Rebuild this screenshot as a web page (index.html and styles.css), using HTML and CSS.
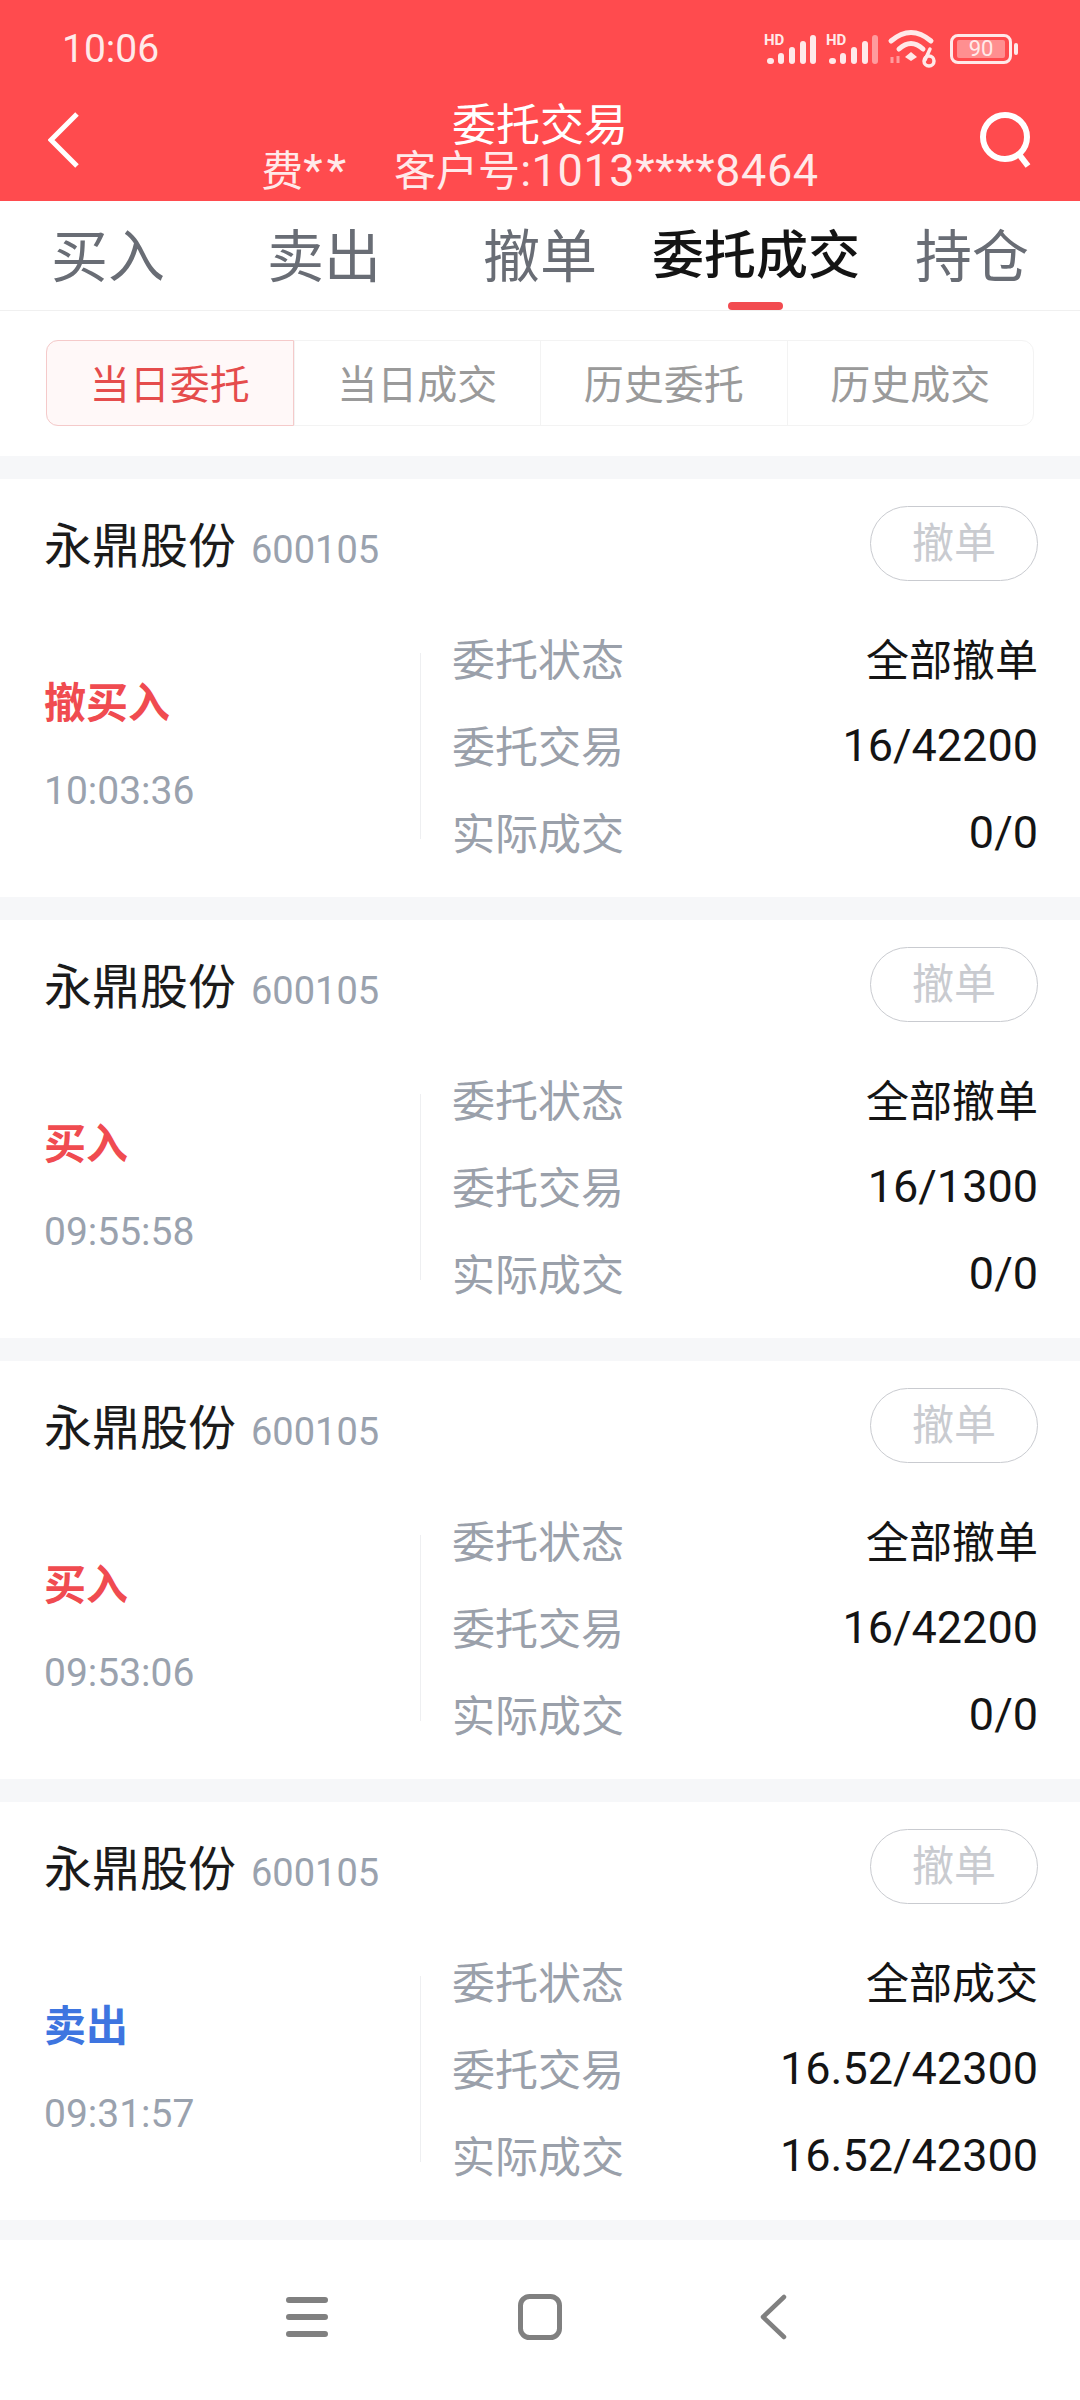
FILE: index.html
```html
<!DOCTYPE html>
<html lang="zh">
<head>
  <title>委托交易</title>
  <meta name="viewport" content="width=device-width, initial-scale=1.0">
  <link rel="stylesheet" href="styles.css">
</head>
<body>
  <div id="app">
    <div id="header">
      <div class="status-bar">
        <span class="clock">10:06</span>
        <div class="status-icons">
          <svg class="signal" width="52" height="32" viewBox="0 0 52 32">
            <text x="0" y="12" class="hd">HD</text>
            <rect x="3" y="25" width="7" height="6" rx="3" fill="#ffe9e9"/>
            <rect x="14" y="20" width="6" height="11" rx="3" fill="#ffe9e9"/>
            <rect x="25" y="14" width="6" height="17" rx="3" fill="#ffe9e9"/>
            <rect x="36" y="8" width="6" height="23" rx="3" fill="#ffe9e9"/>
            <rect x="46" y="2" width="6" height="29" rx="3" fill="#ffe9e9"/>
          </svg>
          <svg class="signal second" width="52" height="32" viewBox="0 0 52 32">
            <text x="0" y="12" class="hd">HD</text>
            <rect x="3" y="25" width="7" height="6" rx="3" fill="#ffe9e9"/>
            <rect x="14" y="20" width="6" height="11" rx="3" fill="#ffe9e9"/>
            <rect x="25" y="14" width="6" height="17" rx="3" fill="#ffe9e9"/>
            <rect x="36" y="8" width="6" height="23" rx="3" fill="#ffe9e9"/>
            <rect x="46" y="2" width="6" height="29" rx="3" fill="#ff9b9d"/>
          </svg>
          <svg class="wifi" width="50" height="38" viewBox="0 0 50 38">
            <path d="M3 11 Q23 -6 43 11" fill="none" stroke="#ffe9e9" stroke-width="5" stroke-linecap="round"/>
            <path d="M11 19 Q23 8 35 19" fill="none" stroke="#ffe9e9" stroke-width="5" stroke-linecap="round"/>
            <path d="M17 27 L23 22 L29 27 L23 31 Z" fill="#ffe9e9"/>
            <path d="M4 27 V33 M10 26 V33" stroke="#ff9b9d" stroke-width="3"/>
            <circle cx="41" cy="31" r="5" fill="none" stroke="#ffe9e9" stroke-width="3.5"/>
            <path d="M37 30 L42 19" stroke="#ffe9e9" stroke-width="3.5" stroke-linecap="round"/>
          </svg>
          <div class="battery">
            <div class="battery-body"><span class="battery-level">90</span></div>
            <div class="battery-nub"></div>
          </div>
        </div>
      </div>
      <div class="title-bar">
        <svg class="nav-icon" width="54" height="56" viewBox="0 0 54 56">
          <path d="M29 2 L3 28 L29 54" fill="none" stroke="#fff" stroke-width="5"/>
        </svg>
        <div class="titles">
          <div class="title">委托交易</div>
          <div class="subtitle">费<span class="stars">**</span><span class="account">客户号<span class="digits">:1013****8464</span></span></div>
        </div>
        <svg class="nav-icon" width="54" height="56" viewBox="0 0 54 56">
          <circle cx="27" cy="25" r="22" fill="none" stroke="#fff" stroke-width="6"/>
          <path d="M40 41 L50 54" stroke="#fff" stroke-width="6"/>
        </svg>
      </div>
    </div>

    <div id="tabs">
      <div class="tab">买入</div>
      <div class="tab">卖出</div>
      <div class="tab">撤单</div>
      <div class="tab tab-active">委托成交</div>
      <div class="tab">持仓</div>
    </div>

    <div id="filters">
      <div class="segments">
        <div class="segment active">当日委托</div>
        <div class="segment">当日成交</div>
        <div class="segment">历史委托</div>
        <div class="segment">历史成交</div>
      </div>
    </div>

    <div id="orders">
      <div class="card">
        <div class="card-head">
          <div class="stock"><span class="stock-name">永鼎股份</span><span class="stock-code">600105</span></div>
          <div class="cancel-btn">撤单</div>
        </div>
        <div class="card-body">
          <div class="side">
            <div class="side-name buy">撤买入</div>
            <div class="side-time">10:03:36</div>
          </div>
          <div class="details">
            <div class="row"><span class="label">委托状态</span><span class="value">全部撤单</span></div>
            <div class="row"><span class="label">委托交易</span><span class="value num">16/42200</span></div>
            <div class="row"><span class="label">实际成交</span><span class="value num">0/0</span></div>
          </div>
        </div>
      </div>
      <div class="card">
        <div class="card-head">
          <div class="stock"><span class="stock-name">永鼎股份</span><span class="stock-code">600105</span></div>
          <div class="cancel-btn">撤单</div>
        </div>
        <div class="card-body">
          <div class="side">
            <div class="side-name buy">买入</div>
            <div class="side-time">09:55:58</div>
          </div>
          <div class="details">
            <div class="row"><span class="label">委托状态</span><span class="value">全部撤单</span></div>
            <div class="row"><span class="label">委托交易</span><span class="value num">16/1300</span></div>
            <div class="row"><span class="label">实际成交</span><span class="value num">0/0</span></div>
          </div>
        </div>
      </div>
      <div class="card">
        <div class="card-head">
          <div class="stock"><span class="stock-name">永鼎股份</span><span class="stock-code">600105</span></div>
          <div class="cancel-btn">撤单</div>
        </div>
        <div class="card-body">
          <div class="side">
            <div class="side-name buy">买入</div>
            <div class="side-time">09:53:06</div>
          </div>
          <div class="details">
            <div class="row"><span class="label">委托状态</span><span class="value">全部撤单</span></div>
            <div class="row"><span class="label">委托交易</span><span class="value num">16/42200</span></div>
            <div class="row"><span class="label">实际成交</span><span class="value num">0/0</span></div>
          </div>
        </div>
      </div>
      <div class="card">
        <div class="card-head">
          <div class="stock"><span class="stock-name">永鼎股份</span><span class="stock-code">600105</span></div>
          <div class="cancel-btn">撤单</div>
        </div>
        <div class="card-body">
          <div class="side">
            <div class="side-name sell">卖出</div>
            <div class="side-time">09:31:57</div>
          </div>
          <div class="details">
            <div class="row"><span class="label">委托状态</span><span class="value">全部成交</span></div>
            <div class="row"><span class="label">委托交易</span><span class="value num">16.52/42300</span></div>
            <div class="row"><span class="label">实际成交</span><span class="value num">16.52/42300</span></div>
          </div>
        </div>
      </div>
    </div>

    <div id="navbar">
      <svg width="42" height="42" viewBox="0 0 42 42">
        <path d="M3 4 H39 M3 21 H39 M3 38 H39" stroke="#808080" stroke-width="6" stroke-linecap="round"/>
      </svg>
      <svg width="44" height="46" viewBox="0 0 44 46">
        <rect x="2.5" y="2.5" width="39" height="41" rx="9" fill="none" stroke="#808080" stroke-width="5"/>
      </svg>
      <svg width="28" height="46" viewBox="0 0 28 46">
        <path d="M25 3 L4 23 L25 43" fill="none" stroke="#808080" stroke-width="4.5" stroke-linecap="round" stroke-linejoin="round"/>
      </svg>
    </div>
  </div>
</body>
</html>
```

FILE: styles.css
```css
html, body {
  margin: 0;
  padding: 0;
}
body {
  font-family: Roboto, "Noto Sans CJK SC", sans-serif;
  background-color: #fff;
}
#app {
  width: 1080px;
  height: 2400px;
  display: flex;
  flex-direction: column;
  overflow: hidden;
}

/* Red header */
#header {
  height: 201px;
  flex-shrink: 0;
  background-color: #ff4b4e;
  color: #fff;
}
.status-bar {
  height: 98px;
  padding: 0 62px;
  display: flex;
  justify-content: space-between;
  align-items: center;
}
.clock {
  font-size: 39px;
  color: #ffeaea;
}
.status-icons {
  display: flex;
  align-items: center;
  gap: 10px;
}
.status-icons svg {
  overflow: visible;
}
.signal .hd {
  font-family: Roboto, sans-serif;
  font-size: 15px;
  font-weight: 700;
  fill: #ffe9e9;
}
.battery {
  display: flex;
  align-items: center;
  gap: 2px;
  margin-left: 2px;
}
.battery-body {
  width: 62px;
  height: 30px;
  box-sizing: border-box;
  border: 3px solid #ffe9e9;
  border-radius: 8px;
  padding: 3px 4px;
  display: flex;
}
.battery-level {
  flex: 1;
  background-color: #ff8f90;
  border-radius: 2px;
  font-size: 22px;
  line-height: 18px;
  text-align: center;
  color: #ffeaea;
}
.battery-nub {
  width: 4px;
  height: 12px;
  border-radius: 2px;
  background-color: #ffe9e9;
}
.title-bar {
  height: 103px;
  padding: 0 48px;
  display: flex;
  justify-content: space-between;
  align-items: center;
}
.title-bar .nav-icon {
  margin-top: -19px;
}
.titles {
  margin-top: -4px;
  text-align: center;
  white-space: nowrap;
}
.title {
  font-size: 44px;
  line-height: 48px;
}
.subtitle {
  font-size: 42px;
  line-height: 42px;
  color: #ffeaea;
}
.subtitle .stars {
  font-size: 45px;
  letter-spacing: 4px;
}
.subtitle .digits {
  font-size: 45px;
  letter-spacing: 0.6px;
}
.account {
  margin-left: 44px;
}

/* Main tabs */
#tabs {
  height: 110px;
  flex-shrink: 0;
  box-sizing: border-box;
  border-bottom: 1px solid #f0f0f0;
  display: grid;
  grid-template-columns: repeat(5, 1fr);
}
.tab {
  position: relative;
  display: flex;
  align-items: center;
  justify-content: center;
  padding-bottom: 8px;
  font-size: 57px;
  color: #696d75;
}
.tab-active {
  font-size: 52px;
  font-weight: 500;
  color: #141414;
}
.tab-active::after {
  content: "";
  position: absolute;
  left: 80px;
  bottom: 0;
  width: 55px;
  height: 8px;
  border-radius: 4px;
  background-color: #f24b50;
}

/* Date filter */
#filters {
  height: 145px;
  flex-shrink: 0;
  box-sizing: border-box;
  padding: 29px 46px 0 46px;
}
.segments {
  display: grid;
  grid-template-columns: repeat(4, 1fr);
  height: 86px;
  box-sizing: border-box;
  border: 1px solid #f3f3f3;
  border-radius: 12px;
}
.segment {
  display: flex;
  align-items: center;
  justify-content: center;
  padding-bottom: 2px;
  font-size: 40px;
  color: #9a9a9a;
  border-left: 1px solid #f3f3f3;
}
.segment:first-child {
  border-left: none;
}
.segment.active {
  margin: -1px 0 -1px -1px;
  color: #e54c4c;
  background-color: #fff8f8;
  border: 1px solid #f5caca;
  border-radius: 12px 0 0 12px;
}

/* Order cards */
#orders {
  flex: 1;
  overflow: hidden;
  background-color: #f6f7f9;
}
.card {
  height: 418px;
  box-sizing: border-box;
  margin-top: 23px;
  padding: 27px 42px 0 44px;
  background-color: #fff;
}
.card-head {
  height: 75px;
  display: flex;
  justify-content: space-between;
  align-items: center;
}
.stock {
  margin-top: -3px;
}
.stock-name {
  font-size: 48px;
  color: #1b1b1b;
}
.stock-code {
  margin-left: 15px;
  font-size: 38px;
  color: #9aa2ae;
}
.cancel-btn {
  width: 168px;
  height: 75px;
  box-sizing: border-box;
  border: 1px solid #c9cbd0;
  border-radius: 38px;
  padding-bottom: 8px;
  display: flex;
  align-items: center;
  justify-content: center;
  font-size: 42px;
  color: #c9cbd0;
}
.card-body {
  margin-top: 34px;
  display: flex;
  align-items: center;
}
.side {
  width: 377px;
  height: 186px;
  flex-shrink: 0;
  box-sizing: border-box;
  border-right: 1px solid #eeeff1;
  display: flex;
  flex-direction: column;
  justify-content: center;
}
.side-name {
  height: 87px;
  line-height: 90px;
  font-size: 42px;
  font-weight: 700;
}
.side-name.buy {
  color: #f04b50;
}
.side-name.sell {
  color: #3e75e0;
}
.side-time {
  height: 87px;
  line-height: 90px;
  font-size: 39px;
  color: #9aa2ae;
}
.details {
  flex: 1;
  padding-left: 31px;
}
.row {
  height: 87px;
  box-sizing: border-box;
  padding-bottom: 4px;
  display: flex;
  justify-content: space-between;
  align-items: center;
}
.label {
  font-size: 43px;
  color: #9aa0aa;
}
.value {
  font-size: 43px;
  color: #141414;
}
.value.num {
  font-size: 45px;
  margin-top: 3px;
}

/* Android nav bar */
#navbar {
  height: 160px;
  flex-shrink: 0;
  box-sizing: border-box;
  padding: 0 190px 6px 190px;
  background-color: #fff;
  display: grid;
  grid-template-columns: repeat(3, 1fr);
  justify-items: center;
  align-items: center;
}
```
